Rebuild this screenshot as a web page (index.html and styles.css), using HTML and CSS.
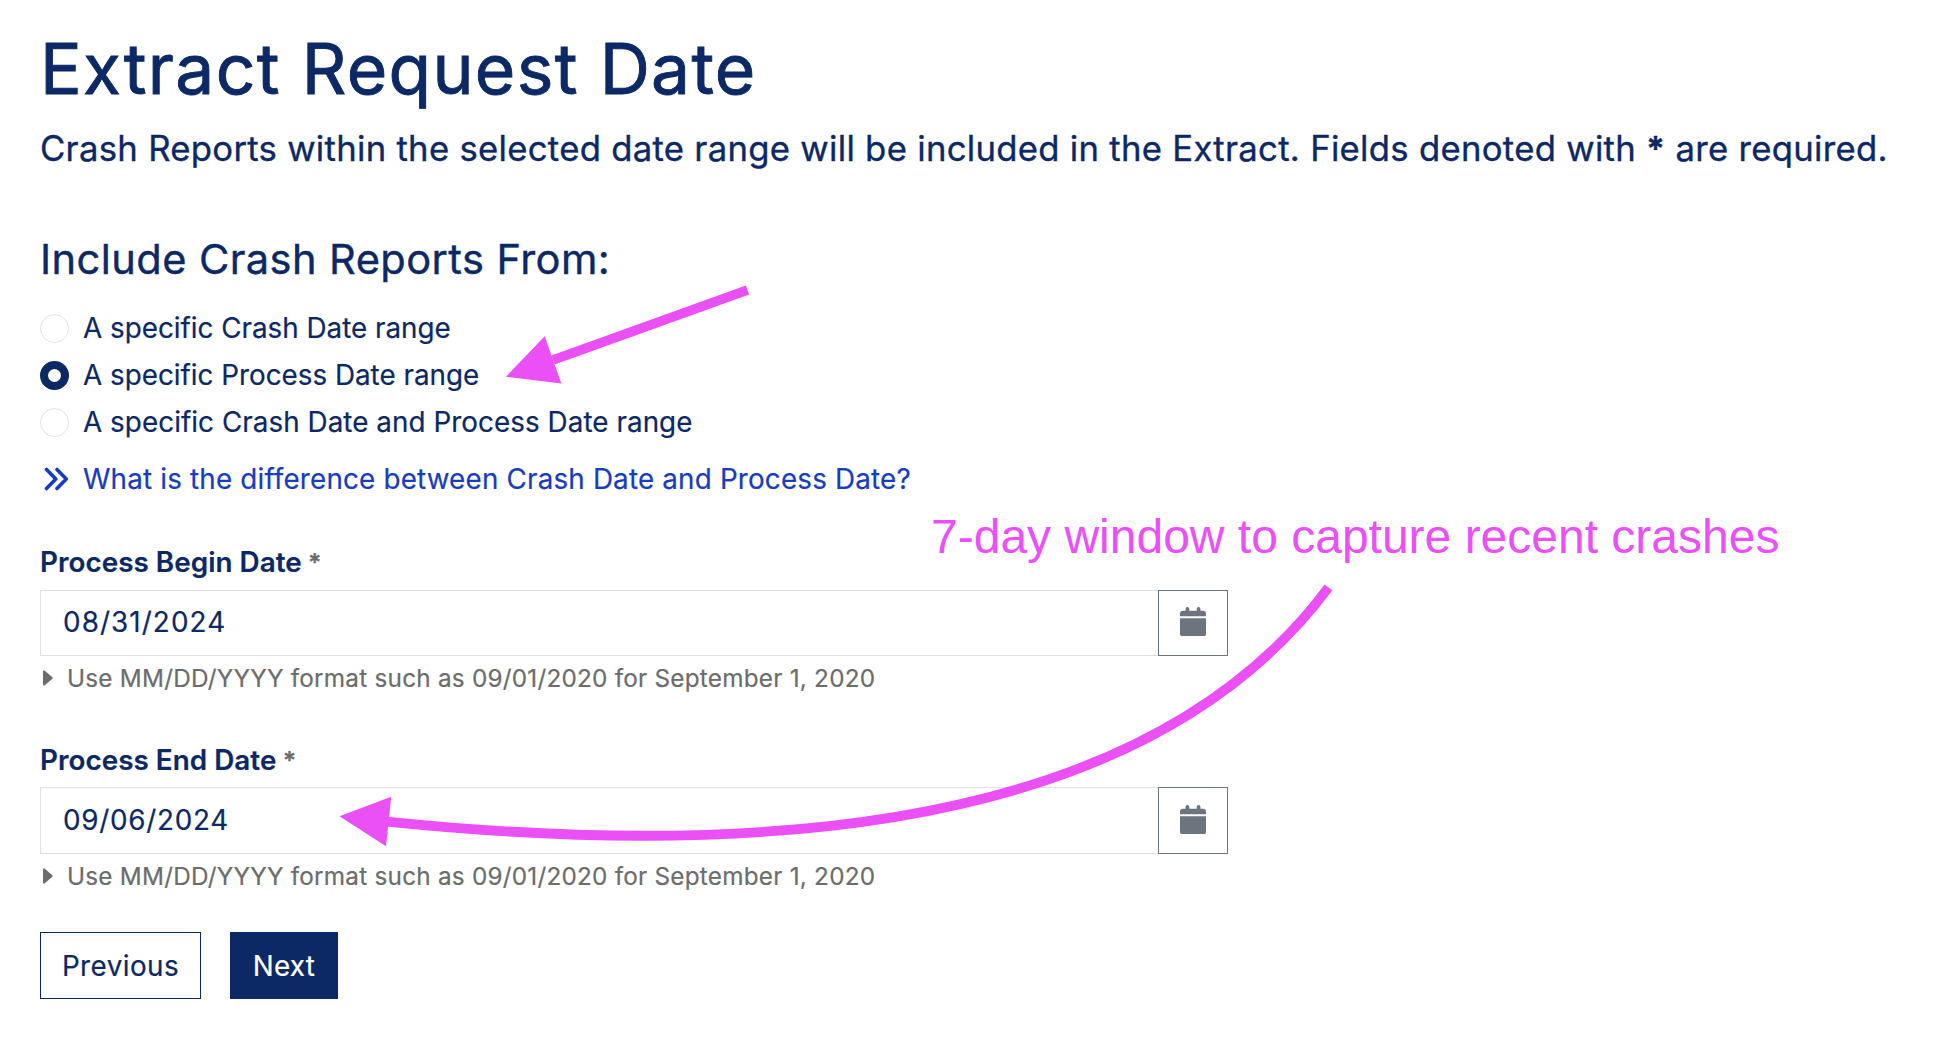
FILE: index.html
```
<!DOCTYPE html>
<html lang="en">
<head>
<meta charset="utf-8">
<title>Extract Request Date</title>
<link rel="stylesheet" href="styles.css">
</head>
<body>
<svg class="defs" aria-hidden="true">
  <symbol id="calendar" viewBox="0 0 448 512"><path d="M96 32V64H48C21.5 64 0 85.5 0 112v48H448V112c0-26.500-21.500-48-48-48H352V32c0-17.700-14.300-32-32-32s-32 14.300-32 32V64H160V32c0-17.700-14.300-32-32-32S96 14.300 96 32zM448 192H0V464c0 26.500 21.500 48 48 48H400c26.500 0 48-21.500 48-48V192z"/></symbol>
  <symbol id="caret" viewBox="0 0 10 16"><path d="M0 1.500Q0 0 1.500.6L9.400 7.200Q10 8 9.400 8.800L1.500 15.400Q0 16 0 14.500Z"/></symbol>
</svg>
<main class="page">
  <h1 class="title">Extract Request Date</h1>
  <p class="intro">Crash Reports within the selected date range will be included in the Extract. Fields denoted with <b class="star">*</b> are required.</p>

  <h2 class="subtitle">Include Crash Reports From:</h2>
  <div class="options">
    <label class="option"><input class="radio" type="radio" name="source"><span class="crash">A specific Crash Date range</span></label>
    <label class="option"><input class="radio" type="radio" name="source" checked><span>A specific Process Date range</span></label>
    <label class="option"><input class="radio" type="radio" name="source"><span class="both">A specific Crash Date and Process Date range</span></label>
  </div>
  <a class="help"><svg class="chevrons" viewBox="0 0 29 24"><path d="M6.500 2.500l9.300 9.500-9.300 9.500M17 2.500l9.300 9.500-9.300 9.500"/></svg><span>What is the difference between Crash Date and Process Date?</span></a>

  <div class="field begin">
    <label class="label" for="begin">Process Begin Date <span class="required">*</span></label>
    <div class="group">
      <input class="date" id="begin" value="08/31/2024">
      <button class="pick" aria-label="Pick date"><svg class="cal"><use href="#calendar"/></svg></button>
    </div>
    <div class="hint"><svg class="caret"><use href="#caret"/></svg>Use MM/DD/YYYY format such as 09/01/2020 for September 1, 2020</div>
  </div>

  <div class="field end">
    <label class="label" for="end">Process End Date <span class="required">*</span></label>
    <div class="group">
      <input class="date" id="end" value="09/06/2024">
      <button class="pick" aria-label="Pick date"><svg class="cal"><use href="#calendar"/></svg></button>
    </div>
    <div class="hint"><svg class="caret"><use href="#caret"/></svg>Use MM/DD/YYYY format such as 09/01/2020 for September 1, 2020</div>
  </div>

  <div class="actions">
    <button class="btn">Previous</button>
    <button class="btn primary">Next</button>
  </div>
</main>

<svg class="notes" viewBox="0 0 1954 1058">
  <path class="stroke" d="M747.500 290L553 360"/>
  <path class="head" d="M506 376.700L544.700 336.300L561.300 383.500Z"/>
  <path class="stroke" d="M1328.500 587.300Q1100 895 387 821.600"/>
  <path class="head" d="M339.500 816.300L391.200 796.700L386 846.200Z"/>
  <text class="note" x="931" y="552.700">7-day window to capture recent crashes</text>
</svg>
</body>
</html>
```
FILE: styles.css
```
* { box-sizing: border-box; }
body {
  margin: 0;
  background: #fff;
  color: #0c2865;
  font: 27.8px/40px Inter, sans-serif;
  -webkit-text-stroke: .2px;
}
.defs { position: absolute; width: 0; height: 0; }
.page { padding: 29px 0 0 40px; }
.title {
  margin: 0;
  font-size: 69.5px;
  line-height: 80px;
  font-weight: 400;
  letter-spacing: 1.33px;
  -webkit-text-stroke: .9px;
}
.intro {
  margin: 15px 0 0;
  font-size: 34.7px;
  line-height: 48px;
  letter-spacing: .285px;
  white-space: nowrap;
  -webkit-text-stroke: .35px;
}
.star { font-size: 34px; line-height: 1; font-weight: 700; }
.subtitle {
  margin: 62px 0 0;
  font-size: 41.6px;
  line-height: 50px;
  font-weight: 400;
  letter-spacing: .42px;
  -webkit-text-stroke: .4px;
}
.options { margin-top: 20px; }
.option { display: flex; align-items: center; gap: 14px; height: 47px; }
.both { letter-spacing: .06px; }
.radio {
  appearance: none;
  width: 29px;
  height: 29px;
  margin: 2px 0 0;
  border: 1px solid #dee2e6;
  border-radius: 50%;
  background: #fff;
}
.radio:checked { border: 8px solid #0c2865; }
.help {
  display: flex;
  align-items: center;
  gap: 14px;
  margin-top: 14px;
  color: #173cc0;
  letter-spacing: .18px;
}
.chevrons {
  width: 29px;
  height: 24px;
  fill: none;
  stroke: currentColor;
  stroke-width: 3.600;
  stroke-linecap: round;
  stroke-linejoin: round;
}
.field { width: 1188px; }
.begin { margin-top: 43px; }
.end { margin-top: 46px; }
.label { display: block; font-weight: 600; letter-spacing: .05px; }
.required {
  color: #6c6c6c;
  font-size: 25px;
  font-weight: 700;
  line-height: 1;
  margin-left: -1px;
}
.group { display: flex; height: 66px; margin-top: 8px; }
.end .group { height: 67px; margin-top: 7px; }
.date {
  flex: 1;
  min-width: 0;
  padding: 0 21px 2px 22px;
  border: 1px solid #dee0e4;
  border-right: 0;
  border-radius: 0;
  background: #fff;
  color: inherit;
  font: inherit;
  letter-spacing: 1.100px;
}
.end .date { letter-spacing: .75px; }
.pick {
  display: flex;
  align-items: center;
  justify-content: center;
  width: 70px;
  padding: 0 1px 3px 0;
  border: 1px solid #6c757d;
  background: #fff;
}
.end .pick { padding-bottom: 2px; }
.cal { width: 26px; height: 29.700px; fill: #6c757d; }
.hint {
  display: flex;
  align-items: center;
  gap: 14px;
  margin-top: 6px;
  padding-left: 3px;
  color: #6c6c6c;
  font-size: 24.3px;
  line-height: 32px;
  letter-spacing: .235px;
}
.caret { width: 10px; height: 16px; fill: currentColor; }
.actions { display: flex; gap: 29px; margin-top: 40px; }
.btn {
  width: 161px;
  height: 67px;
  padding: 0;
  border: 1px solid #0c2865;
  background: #fff;
  color: #0c2865;
  font: inherit;
  letter-spacing: .46px;
}
.primary { width: 108px; background: #0c2865; color: #fff; letter-spacing: .27px; }
.notes {
  position: absolute;
  top: 0;
  left: 0;
  width: 1954px;
  height: 1058px;
  pointer-events: none;
}
.stroke { fill: none; stroke: #ea50f6; stroke-width: 9.800; }
.head, .note { fill: #ea50f6; }
.note { font: 48px "Liberation Sans", Arial, sans-serif; -webkit-text-stroke: 0; }
```
